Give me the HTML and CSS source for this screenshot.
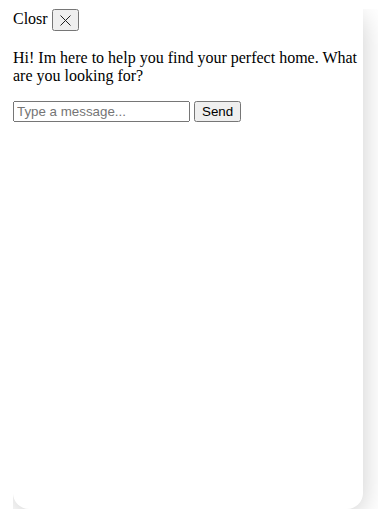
FILE: index.html
```html
<!DOCTYPE html>
<html>
<head>
<meta charset="utf-8">
<link rel="stylesheet" href="styles.css">
</head>
<body>
<div class="widget">
  <div class="header">Closr <button class="close" aria-label="Close"><svg width="13" height="13" viewBox="0 0 13 13"><path d="M1.5 1.5 L11.5 11.5 M11.5 1.5 L1.5 11.5" stroke="#222" stroke-width="1" fill="none"/></svg></button></div>
  <p class="msg">Hi! Im here to help you find your perfect home. What are you looking for?</p>
  <div class="composer"><input class="input" type="text" placeholder="Type a message..."> <button class="send">Send</button></div>
</div>
</body>
</html>
```
FILE: styles.css
```css
html, body {
  background: #ffffff;
}
body {
  margin: 9px 0 0 13px;
  font-family: "Liberation Serif", "Times New Roman", serif;
  font-size: 16px;
}
.widget {
  width: 350px;
  height: 500px;
  background: #ffffff;
  border-radius: 16px;
  box-shadow: 0 5px 28px rgba(0, 0, 0, 0.2);
}
.header {
  background: #ffffff;
  padding-bottom: 2px;
}
.close {
  font-family: "Liberation Sans", Arial, sans-serif;
  font-size: 13.333px;
  vertical-align: middle;
  line-height: 0;
  height: 22px;
  padding: 1px 5px;
}
.close svg {
  display: inline-block;
  vertical-align: middle;
}
.msg {
  margin: 16px 0 16px;
}
.input, .send {
  font-family: "Liberation Sans", Arial, sans-serif;
  font-size: 13.333px;
}
.input {
  width: 169px;
}
```
